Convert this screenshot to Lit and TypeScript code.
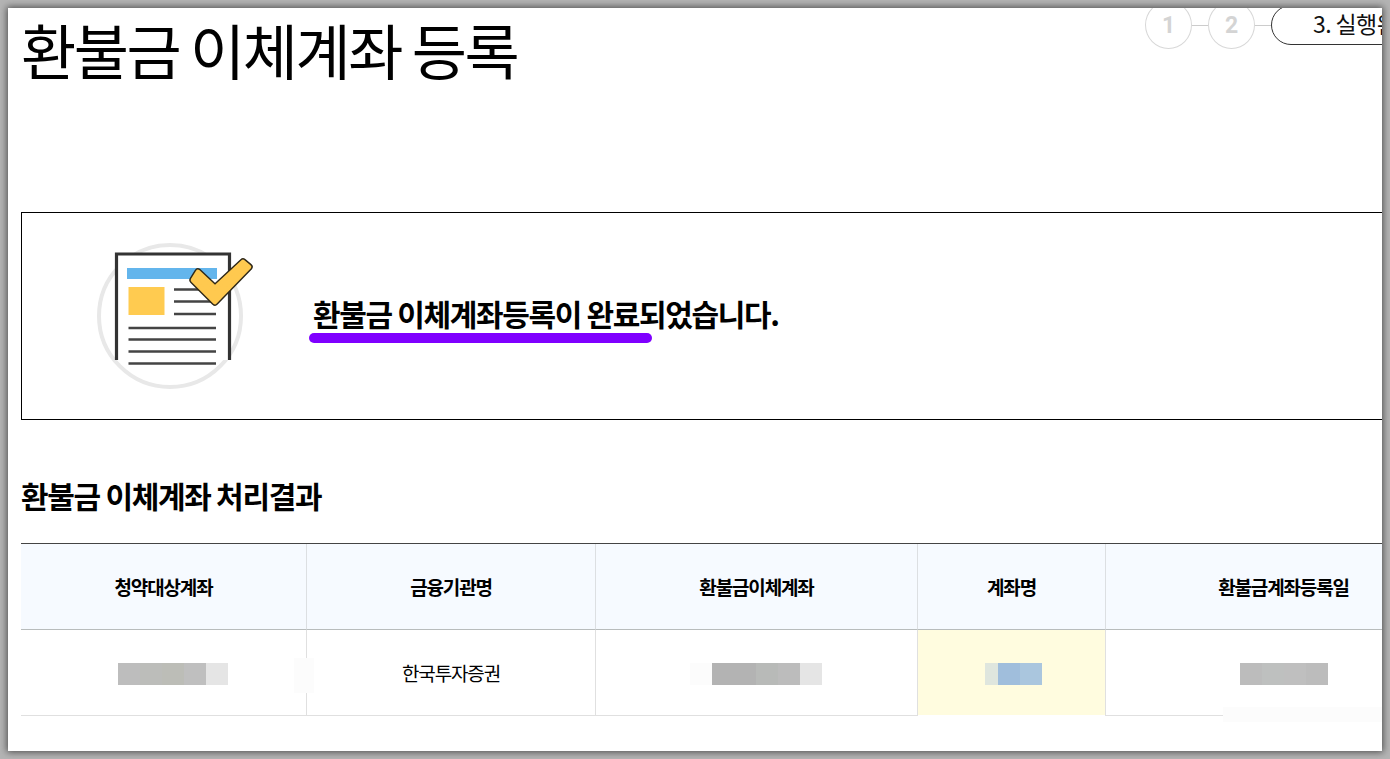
import { LitElement, html, css } from "lit";
import { customElement } from "lit/decorators.js";

const cols = ["청약대상계좌", "금융기관명", "환불금이체계좌", "계좌명", "환불금계좌등록일"];
type Cell = [number, string];
const m1: Cell[] = [[22, "#bdbdbd"], [22, "#bcbdba"], [22, "#bcbdb7"], [22, "#bfbfbf"], [22, "#e5e5e5"]];
const m2: Cell[] = [[22, "#fcfcfc"], [22, "#b3b3b3"], [22, "#b3b3b3"], [22, "#b8bab8"], [22, "#bcbcbc"], [22, "#e5e5e5"]];
const m3: Cell[] = [[13, "#dfe6de"], [22, "#a0bedc"], [22, "#aac6de"]];
const m4: Cell[] = [[22, "#bcbcbc"], [22, "#bec0bf"], [22, "#bfbfbf"], [22, "#bcbcbc"]];

@customElement("app-root")
export class AppRoot extends LitElement {
  static styles = css`
    :host {
      display: block;
      width: 1390px;
      height: 759px;
      box-sizing: border-box;
      padding: 8px;
      background: #b4b4b4;
      font-family: "Noto Sans CJK KR", "Noto Sans", sans-serif;
      color: #000;
      overflow: hidden;
    }
    .frame {
      width: 1374px;
      height: 743px;
      background: #fff;
      overflow: hidden;
      box-shadow: 0 0 7px 1px #4a4a4a;
    }
    .page {
      width: 1441px;
      margin-left: 13px;
      position: relative;
    }
    .head {
      display: flex;
      justify-content: space-between;
      align-items: flex-start;
      height: 204px;
    }
    h1 {
      margin: 0;
      font-size: 60px;
      font-weight: 400;
      line-height: 82px;
      letter-spacing: -2.5px;
      white-space: nowrap;
    }
    .steps {
      display: flex;
      align-items: center;
      margin-top: -7px;
      width: 317px;
      flex: none;
    }
    .dot {
      box-sizing: border-box;
      width: 47px;
      height: 48px;
      border: 1px solid #d8d8d8;
      border-radius: 50%;
      display: flex;
      align-items: center;
      justify-content: center;
      color: #d4d4d4;
      font: 700 23px Roboto, sans-serif;
      flex: none;
    }
    .link {
      width: 16px;
      height: 1px;
      background: #ccc;
      flex: none;
    }
    .pill {
      box-sizing: border-box;
      flex: none;
      width: 190px;
      height: 40px;
      border: 1px solid #333;
      border-radius: 20px;
      padding-left: 41px;
      font-size: 23px;
      line-height: 35px;
      letter-spacing: -0.6px;
      white-space: nowrap;
      color: #111;
    }
    .card {
      box-sizing: border-box;
      height: 208px;
      border: 1px solid #000;
      display: flex;
      align-items: center;
    }
    .card svg {
      flex: none;
      margin-left: 54px;
      width: 170px;
      height: 160px;
    }
    .msg {
      margin-left: 67px;
      font-size: 30px;
      font-weight: 700;
      line-height: 40px;
      letter-spacing: -1.35px;
      white-space: nowrap;
      position: relative;
      top: -3px;
    }
    .mark {
      position: absolute;
      left: -4px;
      top: 40px;
      width: 343px;
      height: 10px;
      border-radius: 5px;
      background: #7f00ff;
    }
    h2 {
      margin: 0;
      padding-top: 55px;
      font-size: 30px;
      font-weight: 700;
      line-height: 40px;
      height: 68px;
      letter-spacing: -1.3px;
      white-space: nowrap;
    }
    .grid {
      display: grid;
      grid-template-columns: 286px 289px 322px 188px 356px;
      border-top: 1px solid #444;
    }
    .th, .td {
      box-sizing: border-box;
      display: flex;
      align-items: center;
      justify-content: center;
      font-size: 19px;
      letter-spacing: -1.15px;
      border-right: 1px solid #dcdfe2;
    }
    .th {
      height: 86px;
      font-weight: 700;
      background: #f6faff;
      border-bottom: 1px solid #b8bcbc;
    }
    .td {
      height: 86px;
      box-shadow: inset 0 -1px 0 #e0e0e0;
      border-right-color: #e0e0e0;
      font-weight: 400;
    }
    .td.text { padding-bottom: 2px; }
    .td.hl {
      background: #fffcdf;
      background-clip: padding-box;
      box-shadow: inset 0 -1px 0 #fff;
    }
    .th:last-child, .td:last-child { border-right: 0; }
    .mosaic { display: flex; height: 22px; margin-top: 1px; }
    .mosaic i { display: block; height: 100%; }
    .mosaic.a { margin-left: 18px; }
    .mosaic.b { margin-left: -2px; }
    .mosaic.c { margin-left: 4px; }
    .smudge { position: absolute; background: #fcfcfc; }
    .s1 { left: 273px; top: 650px; width: 20px; height: 35px; }
    .s2 { left: 1202px; top: 699px; width: 239px; height: 15px; }
  `;

  private mosaic(cells: Cell[], cls = "") {
    return html`<div class="mosaic ${cls}">
      ${cells.map(([w, c]) => html`<i style=${`width:${w}px;background:${c}`}></i>`)}
    </div>`;
  }

  render() {
    return html`
      <div class="frame">
        <div class="page">
          <div class="head">
            <h1>환불금 이체계좌 등록</h1>
            <div class="steps">
              <div class="dot">1</div><div class="link"></div>
              <div class="dot">2</div><div class="link"></div>
              <div class="pill">3. 실행완료</div>
            </div>
          </div>
          <div class="card">
            <svg viewBox="76 236 170 160" overflow="visible" aria-hidden="true">
              <circle cx="170" cy="316" r="71" fill="#fff" stroke="#e8e8e8" stroke-width="4"/>
              <path d="M116.500 360V254H229.500V360" fill="#fff" stroke="#333" stroke-width="3.200"/>
              <rect x="127" y="268" width="90" height="11" fill="#63b5ec"/>
              <rect x="128.500" y="287" width="36" height="28" fill="#ffcb50"/>
              <path d="M174 289.500H216M174 301.500H216M174 314H216M128.500 328H216M128.500 339.500H216M128.500 351.500H216M128.500 363.500H216" stroke="#444" stroke-width="2.400" fill="none"/>
              <path d="M198 272L215 288L243 262L249 267L215 302L193 280Z" fill="#ffc94f" stroke="#2f2818" stroke-width="7.500" stroke-linejoin="round"/>
              <path d="M198 272L215 288L243 262L249 267L215 302L193 280Z" fill="#ffc94f" stroke="#ffc94f" stroke-width="4.600" stroke-linejoin="round"/>
            </svg>
            <div class="msg">환불금 이체계좌등록이 완료되었습니다.<span class="mark"></span></div>
          </div>
          <h2>환불금 이체계좌 처리결과</h2>
          <div class="grid">
            ${cols.map((c) => html`<div class="th">${c}</div>`)}
            <div class="td">${this.mosaic(m1, "a")}</div>
            <div class="td text">한국투자증권</div>
            <div class="td">${this.mosaic(m2, "b")}</div>
            <div class="td hl">${this.mosaic(m3, "c")}</div>
            <div class="td">${this.mosaic(m4)}</div>
          </div>
          <div class="smudge s1"></div>
          <div class="smudge s2"></div>
        </div>
      </div>
    `;
  }
}
